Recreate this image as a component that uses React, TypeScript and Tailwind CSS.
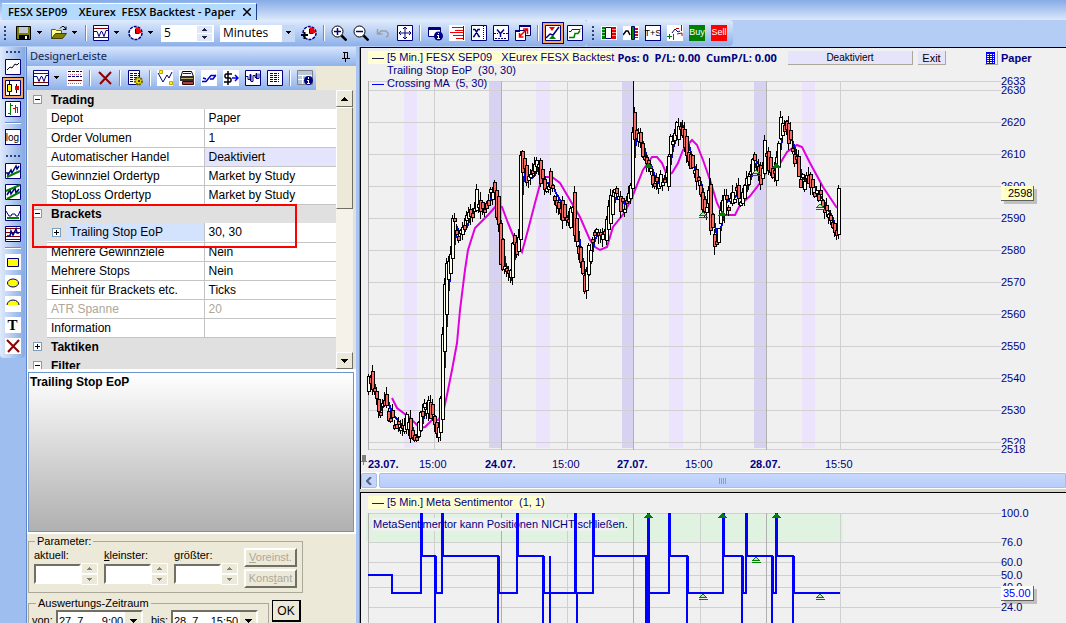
import { ReactNode } from "react";

type Point = [number, number];

// price curve of the four trading days
const PRICE: Point[] = [
  [368, 400], [369, 370], [373, 387], [378, 403], [380, 417], [385, 393], [389, 413], [393, 417],
  [402, 427], [405, 433], [409, 417], [412, 433], [415, 443], [418, 437], [422, 413], [425, 415],
  [429, 398], [433, 417], [437, 437], [441, 413], [442, 400], [443, 353], [445, 311], [446, 287],
  [448, 270], [452, 257], [453, 223], [460, 237], [467, 223], [471, 208], [475, 213], [478, 197],
  [483, 212], [488, 203], [493, 190], [497, 203], [500, 230], [503, 270], [507, 272], [511, 283],
  [513, 243], [518, 253], [520, 237], [521, 148], [524, 170], [528, 180], [535, 173], [539, 160],
  [542, 177], [546, 187], [549, 177], [553, 192], [560, 203], [567, 223], [571, 220], [573, 197],
  [577, 240], [581, 260], [586, 290], [590, 250], [595, 233], [607, 233], [610, 213], [613, 197],
  [617, 195], [622, 205], [627, 203], [632, 180], [633, 120], [637, 137], [642, 138], [644, 163],
  [648, 160], [653, 177], [656, 187], [662, 177], [667, 180], [670, 153], [673, 138], [677, 133],
  [678, 115], [682, 130], [687, 145], [693, 170], [700, 183], [705, 210], [708, 213], [709, 180],
  [712, 223], [716, 247], [720, 223], [725, 197], [730, 202], [737, 192], [742, 203], [747, 183],
  [752, 170], [753, 160], [758, 165], [763, 180], [766, 140], [768, 160], [772, 170], [776, 177],
  [779, 143], [783, 117], [787, 127], [792, 147], [797, 160], [802, 187], [808, 170], [812, 187],
  [818, 195], [825, 207], [832, 220], [836, 237], [838, 230], [839, 195],
];

const AVERAGE: Point[] = [
  [392, 398], [397, 408], [410, 418], [420, 428], [425, 427], [432, 420], [438, 420], [443, 413],
  [447, 395], [452, 370], [457, 343], [460, 310], [465, 270], [468, 250], [475, 228], [488, 215],
  [497, 205], [502, 207], [508, 223], [515, 240], [522, 252], [528, 230], [535, 203], [542, 177],
  [552, 177], [560, 183], [570, 200], [580, 217], [590, 240], [595, 247], [600, 250], [607, 247],
  [613, 227], [625, 212], [633, 195], [643, 170], [652, 157], [657, 157], [662, 163], [667, 175],
  [672, 173], [678, 163], [683, 150], [692, 140], [697, 145], [703, 160], [710, 180], [717, 203],
  [723, 215], [735, 215], [740, 205], [750, 196], [760, 183], [767, 170], [778, 167], [787, 152],
  [797, 145], [802, 147], [810, 163], [823, 187], [837, 208],
];

const priceAt = (x: number) => {
  const i = PRICE.findIndex((p) => p[0] >= x);
  if (i === -1) return PRICE[PRICE.length - 1][1];
  if (i === 0) return PRICE[0][1];
  const [x0, y0] = PRICE[i - 1];
  const [x1, y1] = PRICE[i];
  return y0 + ((y1 - y0) * (x - x0)) / (x1 - x0);
};

// repeatable noise, 0..1
const noise = (n: number) => {
  const v = Math.sin(n * 12.9898) * 43758.5453;
  return v - Math.floor(v);
};

const candles = Array.from({ length: 236 }, (_, i) => {
  const x = 368 + i * 2;
  const open = priceAt(x - 1) + (noise(i) - 0.5) * 16;
  const close = priceAt(x + 2) + (noise(i + 500) - 0.5) * 16;
  const top = Math.round(Math.min(open, close));
  const height = Math.max(4, Math.round(Math.abs(close - open)));
  return {
    x,
    top,
    height,
    up: close < open,
    high: top - Math.round(noise(i + 900) * 8),
    low: top + height + Math.round(noise(i + 1300) * 8),
  };
});

const toPath = (points: Point[]) => "M" + points.map((p) => p.join(" ")).join("L");

const FAST = toPath(
  Array.from({ length: 157 }, (_, i): Point => {
    const x = 370 + i * 3;
    return [x, Math.round((priceAt(x) + priceAt(x - 2) + priceAt(x - 4)) / 3)];
  })
);

const SENTIMENT =
  "M368 575H392V593H421V513V556H435V640V593H442V513V556H498V640V593H517V513V556H543V640V593H593V513V556H646V640V593H648V513V593H669V513V556H687V640V593H723V513V556H742V640V593H746V513V556H772V640V593H776V513V556H793V640V593H840" +
  "M550 556V640M575 513V593M577 593V640";
const SPIKES =
  "M422 513V556M436 556V593M443 513V556M499 556V593M518 513V556M544 556V593M576 513V593M594 513V556M647 556V640M649 513V640M670 513V556M688 556V593M724 513V556M743 556V593M747 513V556M773 556V593M777 513V556M794 556V593";

const DAYS = [501, 633, 766];
const HOURS = [434, 567, 700, 840];

function Icon({ frame, children }: { frame?: boolean; children?: ReactNode }) {
  return (
    <svg width="16" height="16" viewBox="0 0 16 16" fill="none" className="block shrink-0">
      {frame && <path d="M.5 .5h15v15h-15z" fill="#fff" stroke="#000080" />}
      {children}
    </svg>
  );
}

const WaveIcon = () => (
  <Icon frame>
    <path d="M1 3.500h14M1 12.500h14" stroke="#800000" />
    <path d="M1 6.500h3l2 5 2-5h1l2 5 2-6h2" stroke="#000080" />
  </Icon>
);

const ClockIcon = ({ plus }: { plus?: boolean }) => (
  <Icon>
    <circle cx="8.500" cy="8" r="6.500" fill="#fff" stroke="#000080" strokeWidth="1.500" strokeDasharray="3 1" />
    <path d="M8.500 8V2a6 6 0 0 1 6 6z" fill="#f00000" />
    <path d="M8.500 4v4.500h4" stroke="#000080" />
    {plus && <path d="M0 10h7M3.500 7v7" stroke="#000" strokeWidth="2" />}
  </Icon>
);

const CrossIcon = () => (
  <Icon>
    <path d="M2 2l12 12M14 2L3 14" stroke="#900000" strokeWidth="2" />
  </Icon>
);

const Zoom = ({ plus }: { plus?: boolean }) => (
  <Icon>
    <circle cx="6.500" cy="6.500" r="5.500" fill="#fff" stroke="#000" />
    <path d={plus ? "M3 6.500h7M6.500 3v7" : "M3 6.500h7"} stroke="#000080" strokeWidth="1.500" />
    <path d="M10.500 10.500l5 5" stroke="#000" strokeWidth="2.500" />
  </Icon>
);

const InfoIcon = () => (
  <Icon>
    <path d="M1.500 2.500h12v9h-12z" fill="#fff" stroke="#000080" />
    <path d="M1 3h13v2H1z" fill="#000080" />
    <circle cx="11.500" cy="11" r="4.500" fill="#000080" />
    <path d="M11.500 8v1M10 10.500h2M11.500 10v4M10 13.500h3" stroke="#fff" />
  </Icon>
);

const ListIcon = ({ gear }: { gear?: boolean }) => (
  <Icon frame={!gear}>
    {gear && <path d="M1.500 .5h11v14h-11z" fill="#fff" stroke="#000080" />}
    <path d="M3 3.500h9M3 5.500h9M3 7.500h9M3 9.500h9M3 11.500h9" stroke="#000080" strokeDasharray="3 1" />
    {gear && (
      <>
        <circle cx="11.500" cy="11" r="3.500" fill="#e8d800" stroke="#706000" strokeDasharray="2 1" strokeWidth="2" />
        <path d="M11 10h2v2h-2z" fill="#504000" />
      </>
    )}
  </Icon>
);

function Tool({ label, active, children }: { label: string; active?: boolean; children: ReactNode }) {
  return (
    <button
      type="button"
      aria-label={label}
      className={
        active
          ? "-m-[3px] flex h-[22px] w-[22px] shrink-0 items-center justify-center border border-[#000080] bg-[#f9a955]"
          : "block h-4 w-4 shrink-0"
      }
    >
      {children}
    </button>
  );
}

const Caret = () => (
  <svg width="7" height="4" viewBox="0 0 7 4" className="shrink-0" shapeRendering="crispEdges">
    <path d="M1 0h5v1H5v1H4v1H3V2H2V1H1z" />
  </svg>
);

const BigCaret = () => (
  <svg width="7" height="4" viewBox="0 0 7 4" className="shrink-0" shapeRendering="crispEdges">
    <path d="M0 0h7v1H6v1H5v1H4v1H3V3H2V2H1V1H0z" />
  </svg>
);

function DropTool({ label, children }: { label: string; children: ReactNode }) {
  return (
    <button type="button" aria-label={label} className="flex w-7 shrink-0 items-center gap-1">
      {children}
      <Caret />
    </button>
  );
}

const Sep = () => <span className="h-4 w-[2px] shrink-0 border-l border-[#6a8ccb] bg-white" />;
const SideSep = () => <span className="h-[2px] w-4 border-t border-[#6a8ccb] bg-white" />;

function Grip({ side }: { side?: boolean }) {
  return (
    <svg width={side ? 16 : 3} height={side ? 3 : 16} shapeRendering="crispEdges" className="shrink-0">
      <path d={side ? "M1 1H16" : "M1 1V16"} stroke="#27417c" strokeWidth="2" strokeDasharray="2 2" />
    </svg>
  );
}

function MainToolbar() {
  return (
    <div className="flex h-[27px] shrink-0 bg-[#b4cdf4]">
      <div className="flex h-[26px] items-center gap-[6px] rounded-r bg-gradient-to-b from-[#e0ebfd] to-[#8db0e9] pr-1 pl-1">
        <Grip />
        <button type="button" aria-label="Speichern" className="ml-[3px] flex w-[29px] items-center gap-1">
          <Icon>
            <path d="M.5 1.500h14v13h-14z" fill="#808000" stroke="#000" />
            <path d="M3 2h9v6H3z" fill="#c0c8d8" />
            <path d="M3 10h10v4H3z" fill="#000" />
            <path d="M9 11h2v3H9z" fill="#fff" />
          </Icon>
          <Caret />
        </button>
        <DropTool label="Öffnen">
          <Icon>
            <path d="M.5 13.500v-9h4l1 1h5v3" fill="#ffff9c" stroke="#606000" />
            <path d="M.5 13.500l4-5h11l-4 5z" fill="#808000" stroke="#404000" />
            <path d="M9 3.500l2-2h2l2 3M12 4.500h3v-3" stroke="#000" />
          </Icon>
        </DropTool>
        <Sep />
        <DropTool label="Chart">
          <WaveIcon />
        </DropTool>
        <DropTool label="Zeit">
          <ClockIcon />
        </DropTool>
        <div className="flex h-[17px] w-[53px] items-center justify-between bg-white pr-[2px] pl-[3px]">
          <input
            aria-label="Periode"
            defaultValue="5"
            className="w-6 min-w-0 font-['Open_Sans',sans-serif] text-[12px] leading-4 outline-none"
          />
          <svg width="15" height="15" shapeRendering="crispEdges">
            <path d="M0 0h15v7H0zM0 8h15v7H0z" fill="#dfe8f6" />
            <path d="M5 5h5L7.500 2zM5 10h5l-2.500 3z" fill="#202040" />
          </svg>
        </div>
        <div className="relative h-[17px] w-[75px] bg-white">
          <select
            aria-label="Einheit"
            className="block h-full w-full appearance-none pl-[3px] font-['Open_Sans',sans-serif] text-[12px] leading-4"
          >
            <option>Minutes</option>
          </select>
          <span className="pointer-events-none absolute inset-y-0 right-0 flex w-[13px] items-center justify-center bg-[#c5d8f6]">
            <Caret />
          </span>
        </div>
        <Tool label="Zeit hinzufügen">
          <ClockIcon plus />
        </Tool>
        <Sep />
        <Tool label="Vergrößern">
          <Zoom plus />
        </Tool>
        <Tool label="Verkleinern">
          <Zoom />
        </Tool>
        <Tool label="Rückgängig">
          <Icon>
            <path d="M2.500 4v5h5M3 9l3-3h5l2 2v3l-2 1" stroke="#9aa0a8" strokeWidth="1.500" />
          </Icon>
        </Tool>
        <Tool label="Verschieben">
          <Icon frame>
            <path d="M8 2v12M2 8h12M6 4l2-2 2 2M6 12l2 2 2-2M4 6L2 8l2 2M12 6l2 2-2 2" stroke="#000080" />
          </Icon>
        </Tool>
        <Sep />
        <Tool label="Info">
          <InfoIcon />
        </Tool>
        <Tool label="Orderbuch">
          <Icon>
            <path d="M0 0h16v16H0z" fill="#fff" />
            <path d="M3 2.500h11M6 5.500h8M1 7.500h13M4 10.500h10M7 13.500h7" stroke="#f00000" />
            <path d="M14.500 1v14" stroke="#800000" />
          </Icon>
        </Tool>
        <Tool label="X-Achse">
          <Icon frame>
            <path d="M2 4.500h2l4 7h1M9 4.500H7l-4 7H2" stroke="#000080" strokeWidth="1.500" />
            <path d="M12.500 1v14" stroke="#000080" strokeDasharray="1 1" />
          </Icon>
        </Tool>
        <Tool label="Y-Achse">
          <Icon frame>
            <path d="M4 4.500l3.500 4 3.500-4M7.500 8v4" stroke="#000080" strokeWidth="1.500" />
            <path d="M1 8.500h4M10 8.500h5M2 13.500h12" stroke="#000080" strokeDasharray="2 1" />
          </Icon>
        </Tool>
        <Tool label="Fenster">
          <Icon>
            <path d="M4.500 .5h11v10h-11z" fill="#fff" stroke="#000080" />
            <path d="M.5 5.500h10v10H.5z" fill="#fff" stroke="#000080" />
            <path d="M4 0h12v2H4zM0 5h5v2H0z" fill="#000080" />
            <path d="M5 11l7-7M8 4h4.500v5M4.500 8v4h4" stroke="#f00000" strokeWidth="1.500" />
          </Icon>
        </Tool>
        <Sep />
        <Tool label="Signale" active>
          <Icon frame>
            <path d="M1 13l4-4 3 1 6-8" stroke="#000080" strokeWidth="1.500" />
            <path d="M4 2h6L7 6z" fill="#f00000" />
            <path d="M4 14h7L7.500 10z" fill="#008000" />
          </Icon>
        </Tool>
        <Tool label="Kapitalkurve">
          <Icon frame>
            <path d="M2 6.500h2l1-2h8l1-1" stroke="#800000" />
            <path d="M2 12.500h5l1-4h3l2-3" stroke="#008000" strokeWidth="1.500" />
          </Icon>
        </Tool>
      </div>
      <div className="flex h-[26px] items-center gap-[6px] rounded-r bg-gradient-to-b from-[#e0ebfd] to-[#8db0e9] pr-[6px] pl-[5px]">
        <Grip />
        <Tool label="Markttiefe">
          <Icon>
            <path d="M0 1h16v14H0z" fill="#fff" />
            <path d="M1 2h3v12H1z" fill="#008000" />
            <path d="M11 2h4v12h-4z" fill="#e00000" />
            <path d="M1 4.500h14M1 7.500h14M1 10.500h14" stroke="#fff" strokeOpacity=".6" />
            <path d="M4.500 2.500h6v11h-6z" fill="#fff" stroke="#000080" />
          </Icon>
        </Tool>
        <Tool label="Chart Trading">
          <Icon>
            <path d="M0 1h16v14H0z" fill="#fff" />
            <path d="M0 10l3-4h2l2 4" stroke="#000" strokeWidth="1.500" />
            <path d="M8.500 1.500h3v13h-3z" fill="#008000" stroke="#000080" />
            <path d="M12 3h3v10h-3z" fill="#e00000" />
            <path d="M12 5.500h3M12 8.500h3M12 11.500h3" stroke="#fff" />
          </Icon>
        </Tool>
        <button
          type="button"
          className="h-4 w-4 border border-[#000080] bg-white text-center text-[9px] leading-[14px] text-black"
        >
          <span className="-mx-1">T+S</span>
        </button>
        <Tool label="Plus minus">
          <Icon>
            <path d="M0 0h16v16H0z" fill="#fff" />
            <path d="M0 11.500h5M2.500 9v5M6.500 9v6" stroke="#008000" />
            <path d="M5 8l3-4 3 3 2-1" stroke="#000080" />
            <path d="M9 3.500h3M14.500 0v6M10 9l5-1v3" stroke="#c00000" />
          </Icon>
        </Tool>
        <button type="button" className="flex h-4 w-4 items-center justify-center bg-[#008000] text-[9px] text-white">
          Buy
        </button>
        <button type="button" className="flex h-4 w-4 items-center justify-center bg-[#ff0000] text-[9px] text-white">
          Sell
        </button>
      </div>
    </div>
  );
}

function SideBar() {
  return (
    <aside className="w-[26px] shrink-0 bg-[#9ebef0]">
      <div className="flex w-[25px] flex-col items-center gap-[5px] rounded-b bg-gradient-to-r from-[#dfeafc] to-[#86a9e4] pt-[4px] pb-1">
        <Grip side />
        <Tool label="Linie">
          <Icon frame>
            <path d="M2 11l3-3 2 1 3-4 2 1 2-2" stroke="#000" />
          </Icon>
        </Tool>
        <Tool label="Kerzen" active>
          <Icon frame>
            <path d="M4.500 1v14M11.500 4v9" stroke="#000" />
            <path d="M2.500 4.500h4v7h-4z" fill="#ffff00" stroke="#000" />
            <path d="M10 6h4v4h-4z" fill="#e00000" />
          </Icon>
        </Tool>
        <Tool label="Balken">
          <Icon frame>
            <path d="M5.500 2v12M3 12.500h2M6 4.500h2" stroke="#008000" />
            <path d="M10.500 4v8M8 7.500h2M11 6.500h2M12.500 6v6" stroke="#f00000" />
          </Icon>
        </Tool>
        <SideSep />
        <button type="button" className="h-4 w-4 border border-[#000080] bg-white text-[10px] leading-[13px]">
          log
        </button>
        <span className="h-0" />
        <Grip side />
        <Tool label="Trendlinie">
          <Icon frame>
            <path d="M1 10h2v2l3-5 1 3 4-7 1 3 2-3" stroke="#000080" strokeWidth="1.500" />
            <path d="M2 14L15 8" stroke="#008000" strokeWidth="2" />
          </Icon>
        </Tool>
        <Tool label="Kanal">
          <Icon frame>
            <path d="M2 11l3-5 1 4 4-6 1 5 3-4" stroke="#000080" strokeWidth="1.500" />
            <path d="M1 7l14-6M2 15L15 8" stroke="#008000" strokeWidth="2" />
          </Icon>
        </Tool>
        <Tool label="Unterstützung">
          <Icon frame>
            <path d="M1 6l3 5h2l1-2h3l1 2h2l2-5" stroke="#000080" />
            <path d="M2 13h12" stroke="#008000" strokeWidth="2" />
          </Icon>
        </Tool>
        <Tool label="Fibonacci">
          <Icon frame>
            <path d="M1 2.500h14M1 6.500h14M1 10.500h14M1 13.500h14" stroke="#800000" />
            <path d="M2 10h3l1-5 2 4 3-6 1 4h2" stroke="#000080" strokeWidth="1.500" />
          </Icon>
        </Tool>
        <SideSep />
        <Tool label="Rechteck">
          <Icon>
            <path d="M0 0h16v16H0z" fill="#fff" />
            <path d="M2.500 4.500h11v8h-11z" fill="#ffff00" stroke="#000080" />
          </Icon>
        </Tool>
        <Tool label="Ellipse">
          <Icon>
            <path d="M0 0h16v16H0z" fill="#fff" />
            <ellipse cx="8" cy="8" rx="5.500" ry="4" fill="#ffff00" stroke="#000080" />
          </Icon>
        </Tool>
        <Tool label="Bogen">
          <Icon>
            <path d="M0 0h16v16H0z" fill="#fff" />
            <path d="M2 9a6 5 0 0 1 12 0z" fill="#ffff00" />
            <path d="M2 9a6 5 0 0 1 12 0" stroke="#000080" />
          </Icon>
        </Tool>
        <button
          type="button"
          className="h-4 w-4 bg-white text-center font-['Liberation_Serif',serif] text-[15px] leading-4 font-bold"
        >
          T
        </button>
        <Tool label="Löschen">
          <span className="block bg-white">
            <CrossIcon />
          </span>
        </Tool>
      </div>
    </aside>
  );
}

function DesignerToolbar() {
  return (
    <div className="flex h-6 shrink-0 bg-[#ece9d8]">
      <div className="flex items-center gap-[6px] bg-gradient-to-b from-[#e0ebfd] to-[#8db0e9] pr-[3px] pl-[6px]">
        <DropTool label="Studie">
          <WaveIcon />
        </DropTool>
        <Tool label="Linien">
          <Icon>
            <path d="M0 0h16v16H0z" fill="#fff" />
            <path d="M1 1.500h14M1 6.500h14" stroke="#000080" strokeDasharray="3 1" />
            <path d="M1 4.500h14M1 13.500h14" stroke="#c06080" strokeDasharray="1 1" />
            <path d="M1 10.500h14" stroke="#800000" />
          </Icon>
        </Tool>
        <Sep />
        <Tool label="Entfernen">
          <CrossIcon />
        </Tool>
        <Sep />
        <Tool label="Einstellungen">
          <ListIcon gear />
        </Tool>
        <Sep />
        <Tool label="Signal">
          <Icon>
            <path d="M0 0h16v16H0z" fill="#fff" />
            <path d="M1 3l5 9 4-7 2 3 3-6" stroke="#000080" />
            <path d="M2.500 .5h3v3h-3zM12.500 11.500h3v3h-3z" fill="#ffff00" stroke="#c0a000" />
          </Icon>
        </Tool>
        <Tool label="Drucken">
          <Icon>
            <path d="M0 0h16v16H0z" fill="#fff" />
            <path d="M3.500 1.500h9l2 5H2z" fill="#fff" stroke="#000" />
            <path d="M4 3.500h8" stroke="#800000" />
            <path d="M1 6h14v5H1z" fill="#303030" />
            <path d="M2 8.500h12" stroke="#c0b070" />
            <path d="M3.500 11.500h11v3h-11z" fill="#b04040" stroke="#400000" />
          </Icon>
        </Tool>
        <Tool label="Kurve">
          <Icon>
            <path d="M0 0h16v16H0z" fill="#fff" />
            <path d="M1 11.500h4l5-6h5M9 9h3l3-4M2 8l3 1" stroke="#0000c0" strokeWidth="1.500" />
          </Icon>
        </Tool>
        <Tool label="Handel">
          <Icon>
            <path d="M0 0h16v16H0z" fill="#fff" />
            <path d="M9 4H3L2 5v2l1 1h4l1 1v2l-1 1H1M5 1v14" stroke="#000" strokeWidth="1.500" />
            <path d="M9 8h6M12 5l3 3-3 3" stroke="#0000ff" strokeWidth="1.500" />
          </Icon>
        </Tool>
        <Tool label="Sentiment">
          <Icon frame>
            <path d="M1 6.500h2v3h2v-5h1v7h2v-6h2v2h1v-4h1v5h2v-5" stroke="#000080" />
            <path d="M5.500 4v7M11.500 3v6" stroke="#000080" />
          </Icon>
        </Tool>
        <Tool label="Liste">
          <ListIcon />
        </Tool>
        <Sep />
        <Tool label="Report">
          <Icon>
            <path d="M.5 .5h15v14H.5z" fill="#b8c8d8" stroke="#808080" />
            <path d="M1 5.500h14M1 9.500h14M5.500 5v9" stroke="#fff" />
            <circle cx="11.500" cy="10.500" r="4.500" fill="#000080" />
            <path d="M11.500 7v2M10 10.500h2M11.500 10v3M10 13.500h3" stroke="#fff" />
          </Icon>
        </Tool>
      </div>
    </div>
  );
}

type Row = { name: string; value?: string; group?: "open" | "closed"; look?: "active" | "disabled" | "selected" };

const ROWS: Row[] = [
  { name: "Trading", group: "open" },
  { name: "Depot", value: "Paper" },
  { name: "Order Volumen", value: "1" },
  { name: "Automatischer Handel", value: "Deaktiviert", look: "active" },
  { name: "Gewinnziel Ordertyp", value: "Market by Study" },
  { name: "StopLoss Ordertyp", value: "Market by Study" },
  { name: "Brackets", group: "open" },
  { name: "Trailing Stop EoP", value: "30, 30", look: "selected" },
  { name: "Mehrere Gewinnziele", value: "Nein" },
  { name: "Mehrere Stops", value: "Nein" },
  { name: "Einheit für Brackets etc.", value: "Ticks" },
  { name: "ATR Spanne", value: "20", look: "disabled" },
  { name: "Information", value: "" },
  { name: "Taktiken", group: "closed" },
  { name: "Filter", group: "open" },
];

function Expander({ closed }: { closed?: boolean }) {
  return (
    <svg width="9" height="9" shapeRendering="crispEdges" className="mx-auto block">
      <path d="M.5 .5h8v8h-8z" fill="#fff" stroke="#7b9ebd" />
      <path d={closed ? "M2 4.500h5M4.500 2v5" : "M2 4.500h5"} stroke="#000" />
    </svg>
  );
}

const scrollButton =
  "flex h-[17px] w-full shrink-0 items-center justify-center border border-t-white border-r-[#716f64] border-b-[#716f64] border-l-white bg-[#ece9d8]";

function PropertyGrid() {
  return (
    <div className="relative ml-px flex h-[279px] shrink-0 overflow-hidden bg-[#e0e0e0]">
      <table className="h-max flex-1 table-fixed border-collapse text-[12px] leading-[18px]">
        <colgroup>
          <col className="w-[19px]" />
          <col className="w-[157px]" />
          <col />
        </colgroup>
        <tbody>
          {ROWS.map((row) =>
            row.group ? (
              <tr key={row.name} className="h-[19px]">
                <td className="p-0">
                  <Expander closed={row.group === "closed"} />
                </td>
                <td colSpan={2} className="p-0 pl-1 font-bold">
                  {row.name}
                </td>
              </tr>
            ) : (
              <tr key={row.name} className={`h-[19px] ${row.look === "disabled" ? "text-[#aca899]" : ""}`}>
                <td className="p-0" />
                <td className="border-r border-b border-[#c4c4c4] bg-white p-0">
                  {row.look === "selected" ? (
                    <div className="flex items-center bg-[#e0e0e0]">
                      <span className="w-[19px]">
                        <Expander closed />
                      </span>
                      <span className="flex-1 bg-[#d3e3fd] pl-1">{row.name}</span>
                    </div>
                  ) : (
                    <div className="pl-1">{row.name}</div>
                  )}
                </td>
                <td className={`border-b border-[#c4c4c4] p-0 pl-1 ${row.look === "active" ? "bg-[#e4e4fc]" : "bg-white"}`}>
                  {row.value}
                </td>
              </tr>
            )
          )}
        </tbody>
      </table>
      <div className="mr-[3px] flex w-[17px] flex-col bg-[#f4f2e9]">
        <button type="button" aria-label="Nach oben" className={scrollButton}>
          <span className="rotate-180">
            <BigCaret />
          </span>
        </button>
        <div className="h-[102px] border border-t-white border-r-[#716f64] border-b-[#716f64] border-l-white bg-[#ece9d8]" />
        <div className="flex-1" />
        <button type="button" aria-label="Nach unten" className={scrollButton}>
          <BigCaret />
        </button>
      </div>
      <div className="pointer-events-none absolute top-[114px] left-1 h-[44px] w-[265px] border-2 border-[#ff0000]" />
    </div>
  );
}

function Spin({ id, label }: { id: string; label: ReactNode }) {
  return (
    <div className="w-[70px]">
      <label htmlFor={id} className="block pb-px text-[11px] leading-[14px]">
        {label}
      </label>
      <div className="flex items-center">
        <input id={id} className="h-5 w-[47px] border-2 border-[#716f64] border-r-white border-b-white bg-white" />
        <svg width="17" height="22" shapeRendering="crispEdges">
          <path d="M.5 .5h16v10H.5zM.5 11.500h16v10H.5z" fill="#ece9d8" stroke="#fff" />
          <path d="M6 7h5L8.500 4zM6 15h5l-2.500 3z" fill="#808080" />
        </svg>
      </div>
    </div>
  );
}

const raised = "border-2 border-white border-r-[#716f64] border-b-[#716f64]";

function DateField({ id, value }: { id: string; value: string }) {
  return (
    <div className="relative w-[87px]">
      <input
        id={id}
        defaultValue={value}
        className="h-[22px] w-full border-2 border-[#716f64] border-r-white border-b-white bg-white pl-px text-[11px]"
      />
      <span className="absolute top-[2px] right-[2px] flex h-[18px] w-4 items-center justify-center bg-[#ece9d8]">
        <BigCaret />
      </span>
    </div>
  );
}

function ParameterForm() {
  return (
    <form className="flex-1 overflow-hidden bg-[#ece9d8] pl-px text-[11px]">
      <fieldset className="h-[59px] w-[275px] border border-[#aca899] pl-[5px]">
        <legend className="ml-[1px] px-[2px] leading-[14px]">Parameter:</legend>
        <div className="flex">
          <Spin id="akt" label="aktuell:" />
          <Spin id="klein" label={<><u>k</u>leinster:</>} />
          <Spin id="gross" label={<><u>g</u>rößter:</>} />
          <div className="flex flex-col gap-[2px] leading-[15px] text-[#aca899]">
            <button type="button" className={`w-[53px] ${raised}`}>
              <u>V</u>oreinst.
            </button>
            <button type="button" className={`w-[53px] ${raised}`}>
              Kons<u>t</u>ant
            </button>
          </div>
        </div>
      </fieldset>
      <div className="mt-[3px] flex items-start">
        <fieldset className="h-16 w-[241px] border border-[#aca899] pl-[3px]">
          <legend className="ml-1 px-[2px] leading-[14px]">Auswertungs-Zeitraum</legend>
          <div className="flex items-start leading-[20px]">
            <label htmlFor="von" className="w-6">von:</label>
            <DateField id="von" value="27. 7.     9:00" />
            <label htmlFor="bis" className="w-7 pl-2">bis:</label>
            <DateField id="bis" value="28. 7.   15:50" />
          </div>
        </fieldset>
        <button type="button" className="mt-1 ml-[3px] h-[22px] w-[29px] border border-r-2 border-b-2 border-black text-[12px]">
          OK
        </button>
      </div>
    </form>
  );
}

function Designer() {
  return (
    <section className="flex w-[330px] shrink-0 flex-col border-l border-[#5f86cb] bg-white">
      <header className="flex h-[19px] shrink-0 items-center justify-between bg-gradient-to-b from-[#d6e4fb] to-[#8fb2ea] pr-[6px] pl-[3px] font-['Noto_Sans',sans-serif] text-[11px] text-[#16234c]">
        DesignerLeiste
        <svg width="8" height="10" fill="none" stroke="#000" shapeRendering="crispEdges">
          <path d="M2.500 1v5M1 .5h5M5 1v5M5.500 1v5M0 6.500h8M3.500 7v3" />
        </svg>
      </header>
      <DesignerToolbar />
      <PropertyGrid />
      <div className="mr-[2px] ml-px mt-[3px] mb-[2px] h-[160px] shrink-0 border border-[#6d94d2] bg-gradient-to-b from-white to-[#b0b0b0] pt-[2px] pl-[1px] text-[12px] leading-[15px] font-bold">
        Trailing Stop EoP
      </div>
      <ParameterForm />
    </section>
  );
}

function Marker({ x, y, open }: { x: number; y: number; open?: boolean }) {
  return open ? (
    <path d={`M${x - 3} ${y}l3-3 3 3zM${x - 4} ${y + 2.5}h9`} fill="#c8e0c8" stroke="#008000" />
  ) : (
    <path d={`M${x - 4} ${y + 2}l4-5h1l4 5z`} fill="#008000" />
  );
}

function Grid({ top, bottom, levels }: { top: number; bottom: number; levels: number[] }) {
  return (
    <g shapeRendering="crispEdges">
      {levels.map((y) => (
        <rect key={y} x="368" y={y} width="100%" height="1" fill="#d0d0d0" />
      ))}
      {HOURS.map((x) => (
        <rect key={x} x={x} y={top} width="1" height={bottom - top} fill="#d0d0d0" />
      ))}
      {[368, ...DAYS].map((x) => (
        <rect key={x} x={x} y={top} width="1" height={bottom - top} fill="#b0b0b0" />
      ))}
    </g>
  );
}

const PRICES = [2620, 2610, 2600, 2590, 2580, 2570, 2560, 2550, 2540, 2530, 2520];
const priceY = (p: number) => Math.round(122 + (2620 - p) * 3.2);

const BANDS = [
  { x: 404, w: 13 },
  { x: 489, w: 13, night: true },
  { x: 536, w: 14 },
  { x: 622, w: 12, night: true },
  { x: 669, w: 14 },
  { x: 754, w: 13, night: true },
  { x: 802, w: 13 },
];

function PricePlot() {
  return (
    <svg className="block h-[396px] min-w-0 flex-1" aria-label="FESX SEP09">
      <g transform="translate(-361,-76)">
        <g shapeRendering="crispEdges">
          {BANDS.map((b) => (
            <rect key={b.x} x={b.x} y="81" width={b.w} height="367" fill={b.night ? "#d8d2f2" : "#ece4fc"} />
          ))}
        </g>
        <Grid top={81} bottom={450} levels={[81, priceY(2630), ...PRICES.map(priceY), 449]} />
        <path d={toPath(AVERAGE)} stroke="#e000e0" strokeWidth="2" fill="none" />
        <g shapeRendering="crispEdges" fill="none">
          <path d={FAST} stroke="#0000ff" strokeWidth="2" />
          <rect x="633" y="81" width="1" height="40" fill="#000" />
          {candles.map((c) => (
            <g key={c.x}>
              <rect x={c.x} y={c.high} width="1" height={c.low - c.high} fill="#000" />
              <rect x={c.x - 1} y={c.top} width="4" height={c.height} fill="#000" />
              <rect x={c.x} y={c.top + 1} width="2" height={c.height - 2} fill={c.up ? "#ffffee" : "#f56c64"} />
            </g>
          ))}
          <rect x="709" y="158" width="1" height="40" fill="#000" />
          <Marker x={648} y={166} />
          <Marker x={722} y={214} />
          <Marker x={776} y={166} />
          <Marker x={703} y={215} open />
          <Marker x={756} y={173} open />
          <Marker x={820} y={207} open />
          <path d="M362 455h4v6h-4zM361 461h6v1h-6zM363 462h1v3h-1z" fill="#808080" />
        </g>
        <g fill="#000080" fontSize="11">
          <text x="368" y="468" fontWeight="bold">23.07.</text>
          <text x="419" y="468">15:00</text>
          <text x="485" y="468" fontWeight="bold">24.07.</text>
          <text x="552" y="468">15:00</text>
          <text x="617" y="468" fontWeight="bold">27.07.</text>
          <text x="685" y="468">15:00</text>
          <text x="750" y="468" fontWeight="bold">28.07.</text>
          <text x="825" y="468">15:50</text>
        </g>
      </g>
    </svg>
  );
}

function AxisLabel({ y, text }: { y: number; text: string | number }) {
  return (
    <>
      <rect x="0" y={y - 5} width="30" height="10" fill="#f0f0f0" />
      <text x="0" y={y + 4} fill="#000080" fontSize="11">
        {text}
      </text>
    </>
  );
}

function AxisTag({ x, y, text, fill, color }: { x: number; y: number; text: string; fill: string; color: string }) {
  return (
    <g shapeRendering="crispEdges">
      <rect x="3" y={y - 4} width="33" height="15" fill="#000" opacity="0.2" />
      <rect x="0" y={y - 7} width="33" height="15" fill="#606060" />
      <rect x="0" y={y - 7} width="32" height="14" fill={fill} />
      <text x={x} y={y + 4} fill={color} fontSize="11">
        {text}
      </text>
    </g>
  );
}

const legend = "w-max text-[11px] leading-[13px] whitespace-pre text-[#000080]";

const Dash = ({ blue }: { blue?: boolean }) => (
  <span className={`mr-[3px] inline-block h-px w-3 align-middle ${blue ? "bg-[#0000ff]" : "bg-[#202050]"}`} />
);

function Charts() {
  return (
    <main className="flex min-w-0 flex-1 flex-col bg-[#f0f0f0]">
      <section className="shrink-0 border-t border-l border-black">
        <div className="flex h-7 pt-[3px] pl-[7px]">
          <div>
            <div className={`${legend} bg-[#ffffd2] pl-1`}>
              <Dash />[5 Min.] FESX SEP09{"   "}XEurex FESX Backtest
            </div>
            <div className={`${legend} pl-[19px]`}>Trailing Stop EoP  (30, 30)</div>
          </div>
          <div className="pl-[3px] font-['Open_Sans',sans-serif] text-[11px] leading-[14px] font-bold whitespace-pre text-[#000080]">
            Pos: 0  P/L: 0.00  CumP/L: 0.00
          </div>
          <button type="button" className="ml-auto h-[14px] w-[125px] border-r border-b border-[#aca899] bg-[#e6e4fb] text-[10px] leading-3">
            Deaktiviert
          </button>
          <button type="button" className="ml-[5px] h-[14px] w-7 border-r border-b border-[#aca899] bg-[#e6e4fb] text-[11px] leading-3">
            Exit
          </button>
          <button type="button" aria-label="Tabelle" className="ml-[39px] h-[14px] w-[13px] border-r border-b border-[#aca899]">
            <svg width="11" height="12" shapeRendering="crispEdges">
              <path d="M1 0h9v12H1z" fill="#0000ff" />
              <path d="M2 2.500h7M2 4.500h7M2 6.500h7M2 8.500h7M2 10.500h7" stroke="#fff" strokeDasharray="2 1" />
            </svg>
          </button>
          <span className="w-[68px] pl-[3px] text-[11px] leading-[14px] font-bold text-[#000080]">Paper</span>
        </div>
        <div className="relative flex">
          <PricePlot />
          <svg className="block h-[396px] w-[65px] shrink-0">
            <g transform="translate(0,-76)">
              <AxisLabel y={priceY(2630)} text={2630} />
              {PRICES.map((p) => (
                <AxisLabel key={p} y={priceY(p)} text={p} />
              ))}
              <AxisLabel y={81} text={2633} />
              <AxisLabel y={449} text={2518} />
              <AxisTag x={7} y={193} text="2598" fill="#ffffc8" color="#000" />
            </g>
          </svg>
          <div className={`${legend} absolute top-px left-[7px] pl-1`}>
            <Dash blue />Crossing MA  (5, 30)
          </div>
        </div>
        <div className="flex h-[17px] items-stretch gap-[2px] bg-white py-px">
          <button
            type="button"
            aria-label="Zurück"
            className="flex w-4 items-center justify-center rounded-[2px] border border-[#a8bde8] bg-[#c6d6fb]"
          >
            <svg width="6" height="8" fill="none" stroke="#4d6185" strokeWidth="2">
              <path d="M5 0L1 4l4 4" />
            </svg>
          </button>
          <div className="flex flex-1 items-center justify-center rounded-l-[2px] border border-[#a8bde8] bg-gradient-to-b from-[#c8d8fd] to-[#b7cdfa]">
            <svg width="8" height="6" shapeRendering="crispEdges">
              <path d="M0 3h8" stroke="#7c9fe8" strokeWidth="6" strokeDasharray="1 1" />
            </svg>
          </div>
        </div>
      </section>
      <div className="h-[3px] shrink-0 bg-[#d8d4c4]" />
      <section className="flex-1 overflow-hidden border-t border-l border-black">
        <div className="pt-[3px] pl-[7px]">
          <div className={`${legend} bg-[#ffffd2] pl-1`}>
            <Dash />[5 Min.] Meta Sentimentor  (1, 1)
          </div>
        </div>
        <div className="flex">
          <svg className="block h-[640px] min-w-0 flex-1" aria-label="Meta Sentimentor">
            <g transform="translate(-361,-509)">
              <rect x="366" y="513" width="477" height="29" fill="#e0f3e0" />
              <Grid top={513} bottom={1150} levels={[513, 542, 562, 575, 587, 607]} />
              <rect x="372" y="518" width="246" height="13" fill="#f0f0f0" />
              <text x="373" y="528" fontSize="11" fill="#000080">
                MetaSentimentor kann Positionen NICHT schließen.
              </text>
              <g shapeRendering="crispEdges" fill="none">
                <path d={SENTIMENT} stroke="#0000ff" strokeWidth="2" />
                <path d={SPIKES} stroke="#0000ff" strokeWidth="2" />
                <Marker x={648} y={516} />
                <Marker x={722} y={516} />
                <Marker x={776} y={516} />
                <Marker x={703} y={597} open />
                <Marker x={756} y={560} open />
                <Marker x={820} y={597} open />
              </g>
            </g>
          </svg>
          <svg className="block h-[640px] w-[65px] shrink-0">
            <g transform="translate(0,-509)">
              <AxisLabel y={513} text="100.0" />
              <AxisLabel y={542} text="76.0" />
              <AxisLabel y={562} text="60.0" />
              <AxisLabel y={575} text="50.0" />
              <AxisLabel y={587} text="40.0" />
              <AxisLabel y={607} text="24.0" />
              <AxisTag x={2} y={593} text="35.00" fill="#fff" color="#0000ff" />
            </g>
          </svg>
        </div>
      </section>
    </main>
  );
}

export default function App() {
  return (
    <div className="flex h-screen flex-col overflow-hidden bg-[#9ebef0] font-['Liberation_Sans',Arial,sans-serif] text-black">
      <div className="flex h-5 shrink-0 items-end bg-gradient-to-b from-[#86abe6] to-[#dbe8fb] pl-[2px]">
        <div className="flex h-[17px] w-[255px] items-center justify-between border-t border-r border-t-white border-r-[#1c3f86] bg-[#b4dbff] pr-[5px] pl-[6px]">
          <span className="font-['Open_Sans',sans-serif] text-[11px] leading-4 font-semibold whitespace-pre">
            FESX SEP09{"    "}XEurex  FESX Backtest - Paper
          </span>
          <button type="button" aria-label="Schließen">
            <svg width="8" height="8" stroke="#000" strokeWidth="1.500">
              <path d="M0 0l8 8M8 0L0 8" />
            </svg>
          </button>
        </div>
      </div>
      <MainToolbar />
      <div className="flex min-h-0 flex-1">
        <SideBar />
        <Designer />
        <div className="w-1 shrink-0 border-r border-[#8090a8] bg-[#a9c5f3]" />
        <Charts />
      </div>
    </div>
  );
}
